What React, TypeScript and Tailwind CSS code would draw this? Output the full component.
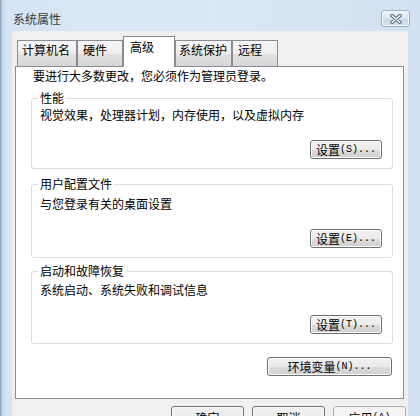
import clsx from "clsx";

const BTN =
  "flex items-center justify-center rounded-[3px] border border-[#707070] bg-[linear-gradient(to_bottom,#f2f2f2_0%,#ebebeb_50%,#dddddd_51%,#cfcfcf_100%)] shadow-[inset_0_0_0_1px_#fbfbfb] text-[12px] leading-[14px] text-black";

function Latin({ children }: { children: React.ReactNode }) {
  return <span className="font-['Liberation_Mono',monospace] text-[10px]">{children}</span>;
}

function WinButton({
  children,
  className,
  disabled,
}: {
  children: React.ReactNode;
  className?: string;
  disabled?: boolean;
}) {
  return (
    <button
      className={clsx(
        BTN,
        disabled && "border-[#adb2b5] bg-none bg-[#f4f4f4] text-[#838383] shadow-none",
        className
      )}
    >
      {children}
    </button>
  );
}

function Tab({
  label,
  width,
  selected,
  pad = "pl-[5px]",
}: {
  label: string;
  width: string;
  selected?: boolean;
  pad?: string;
}) {
  if (selected) {
    return (
      <div
        className={clsx(
          "relative z-10 -mb-[1px] h-[31px] shrink-0 border border-b-0 border-[#898c95] bg-white pt-[3px] text-[12px] leading-[14px]",
          width,
          pad
        )}
      >
        {label}
      </div>
    );
  }
  return (
    <div
      className={clsx(
        "h-[26px] shrink-0 border border-b-0 border-[#898c95] bg-[linear-gradient(to_bottom,#f6f6f6_0%,#eeeeee_50%,#e2e2e2_51%,#d6d6d6_100%)] pt-[2px] text-[12px] leading-[14px]",
        width,
        pad
      )}
    >
      {label}
    </div>
  );
}

function GroupBox({
  title,
  text,
  button,
  className,
  descTop = "mt-[4px]",
}: {
  title: string;
  text: string;
  button: React.ReactNode;
  className?: string;
  descTop?: string;
}) {
  return (
    <fieldset
      className={clsx(
        "rounded-[3px] border border-[#d5dfe5] pr-[10px] pb-[9px] pl-[8px]",
        className
      )}
    >
      <legend className="ml-[-2px] px-[2px] text-[12px] leading-[14px]">{title}</legend>
      <div className={clsx("text-[12px] leading-[14px]", descTop)}>{text}</div>
      <div className="mt-[18px] flex justify-end">
        <WinButton className="h-[19px] w-[72px]">{button}</WinButton>
      </div>
    </fieldset>
  );
}

export default function App() {
  return (
    <div className="flex h-[416px] w-[420px] flex-col overflow-hidden bg-[linear-gradient(to_right,#7f94aa_0px,#c3d7ec_2px,#d6e5f5_8px,#dae7f5_50%,#d2e1f1_100%)] font-['Noto_Sans_CJK_SC','Liberation_Sans',sans-serif] text-black">
      {/* title bar */}
      <div className="flex h-[31px] shrink-0 items-start justify-between pl-[13px] pr-[10px]">
        <span className="mt-[12px] text-[12px] leading-[14px] text-[#3a3a3a]">系统属性</span>
        <button className="mt-[10px] flex h-[17px] w-[29px] items-center justify-center rounded-[3px] border border-[#9aaec4] bg-[linear-gradient(to_bottom,#eef3f9,#d9e4f0_50%,#cbd9e8_51%,#d6e3f0)] shadow-[inset_0_0_0_1px_#f4f8fc]">
          <svg width="12" height="10" viewBox="0 0 12 10">
            <path d="M2 1.5 L10 8.5 M10 1.5 L2 8.5" stroke="#4d5b6b" strokeWidth="3.4" strokeLinecap="round" />
            <path d="M2 1.5 L10 8.5 M10 1.5 L2 8.5" stroke="#ffffff" strokeWidth="1.6" strokeLinecap="round" />
          </svg>
        </button>
      </div>

      {/* client area */}
      <div className="mx-[12px] flex flex-1 flex-col bg-[#f0f0f0] pt-[5px]">
        <div className="ml-[5px] flex h-[30px] items-end">
          <Tab label="计算机名" width="w-[60px]" pad="pl-[4px]" />
          <Tab label="硬件" width="w-[46px]" />
          <Tab label="高级" width="w-[52px]" selected pad="pl-[6px]" />
          <Tab label="系统保护" width="w-[57px]" pad="pl-[3px]" />
          <Tab label="远程" width="w-[46px]" />
        </div>

        <div className="ml-[3px] mr-[4px] flex h-[333px] shrink-0 flex-col border border-[#898c95] bg-white pt-[2px] pr-[10px] pl-[15px]">
          <div className="ml-[2px] text-[12px] leading-[14px]">要进行大多数更改，您必须作为管理员登录。</div>

          <GroupBox
            className="mt-[8px]"
            title="性能"
            text="视觉效果，处理器计划，内存使用，以及虚拟内存"
            descTop="mt-[3px]"
            button={
              <>
                设置<Latin>(S)...</Latin>
              </>
            }
          />
          <GroupBox
            className="mt-[8px]"
            title="用户配置文件"
            text="与您登录有关的桌面设置"
            descTop="mt-[6px]"
            button={
              <>
                设置<Latin>(E)...</Latin>
              </>
            }
          />
          <GroupBox
            className="mt-[6px]"
            title="启动和故障恢复"
            text="系统启动、系统失败和调试信息"
            descTop="mt-[5px]"
            button={
              <>
                设置<Latin>(T)...</Latin>
              </>
            }
          />

          <div className="mt-[13px] mr-[1px] flex justify-end">
            <WinButton className="h-[19px] w-[125px]">
              环境变量<Latin>(N)...</Latin>
            </WinButton>
          </div>
        </div>

        <div className="mt-[7px] flex justify-end gap-[8px] pr-[2px]">
          <WinButton className="h-[23px] w-[73px]">确定</WinButton>
          <WinButton className="h-[23px] w-[73px]">取消</WinButton>
          <WinButton className="h-[23px] w-[73px]" disabled>
            应用<Latin>(A)</Latin>
          </WinButton>
        </div>
      </div>
    </div>
  );
}
